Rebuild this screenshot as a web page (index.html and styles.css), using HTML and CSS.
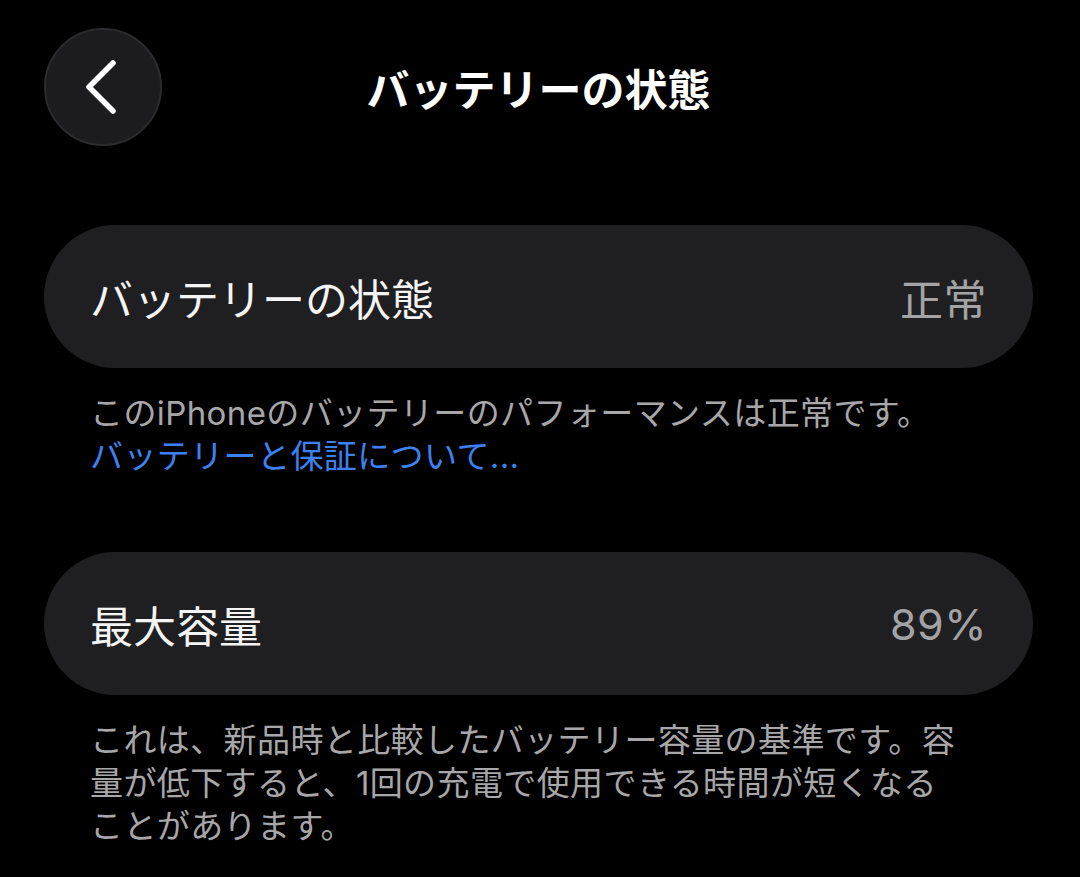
FILE: index.html
```html
<!DOCTYPE html>
<html lang="ja">

<head>
    <meta charset="UTF-8">
    <meta name="viewport" content="width=device-width, initial-scale=1">
    <title>バッテリーの状態</title>
    <link rel="stylesheet" href="styles.css">
</head>

<body>

    <div class="screen">
        <div class="nav_bar">
            <button class="back_btn" aria-label="戻る">
                <svg width="40" height="56" viewBox="0 0 40 56">
                    <path d="M32 4 L8 28 L32 52" fill="none" stroke="#ffffff" stroke-width="5.5"
                        stroke-linecap="round" stroke-linejoin="round" />
                </svg>
            </button>
            <div class="nav_title">バッテリーの状態</div>
            <div class="nav_spacer"></div>
        </div>

        <div class="group first">
            <div class="cell">
                <span class="cell_label">バッテリーの状態</span>
                <span class="cell_value">正常</span>
            </div>
        </div>
        <div class="footnote">
            このiPhoneのバッテリーのパフォーマンスは正常です。<br>
            <a class="link" href="#">バッテリーと保証について...</a>
        </div>

        <div class="group">
            <div class="cell">
                <span class="cell_label">最大容量</span>
                <span class="cell_value">89%</span>
            </div>
        </div>
        <div class="footnote">
            これは、新品時と比較したバッテリー容量の基準です。容<br>
            量が低下すると、1回の充電で使用できる時間が短くなる<br>
            ことがあります。
        </div>
    </div>

</body>

</html>
```

FILE: styles.css
```css
body {
    margin: 0;
    background: #000000;
    color: #ffffff;
    font-family: 'Inter', 'Noto Sans CJK JP', sans-serif;
    height: 100vh;
    overflow: hidden;
}

.screen {
    padding: 28px 47px 0 44px;
}

.nav_bar {
    display: grid;
    grid-template-columns: 118px 1fr 118px;
    align-items: center;
    height: 118px;
}

.back_btn {
    width: 118px;
    height: 118px;
    border-radius: 50%;
    background: #1c1c1e;
    border: 2px solid #2b2b2d;
    display: flex;
    justify-content: center;
    align-items: center;
    padding: 0 4px 0 0;
    cursor: pointer;
}

.nav_title {
    text-align: center;
    font-size: 43px;
    font-weight: 700;
    color: #ffffff;
}

.group {
    margin-top: 74px;
    background: #1f1f21;
    border-radius: 72px;
}

.group.first {
    margin-top: 79px;
}

.cell {
    height: 143px;
    padding: 0 46px;
    display: flex;
    justify-content: space-between;
    align-items: center;
    font-size: 43px;
}

.cell_label {
    color: #f4f4f4;
}

.cell_value {
    color: #a3a3a6;
    letter-spacing: 0.5px;
}

.footnote {
    margin-top: 24px;
    padding: 0 46px;
    font-size: 33px;
    line-height: 43px;
    letter-spacing: 0.4px;
    color: #a7a7aa;
    white-space: nowrap;
}

.link {
    color: #3b82f0;
    text-decoration: none;
}
```
